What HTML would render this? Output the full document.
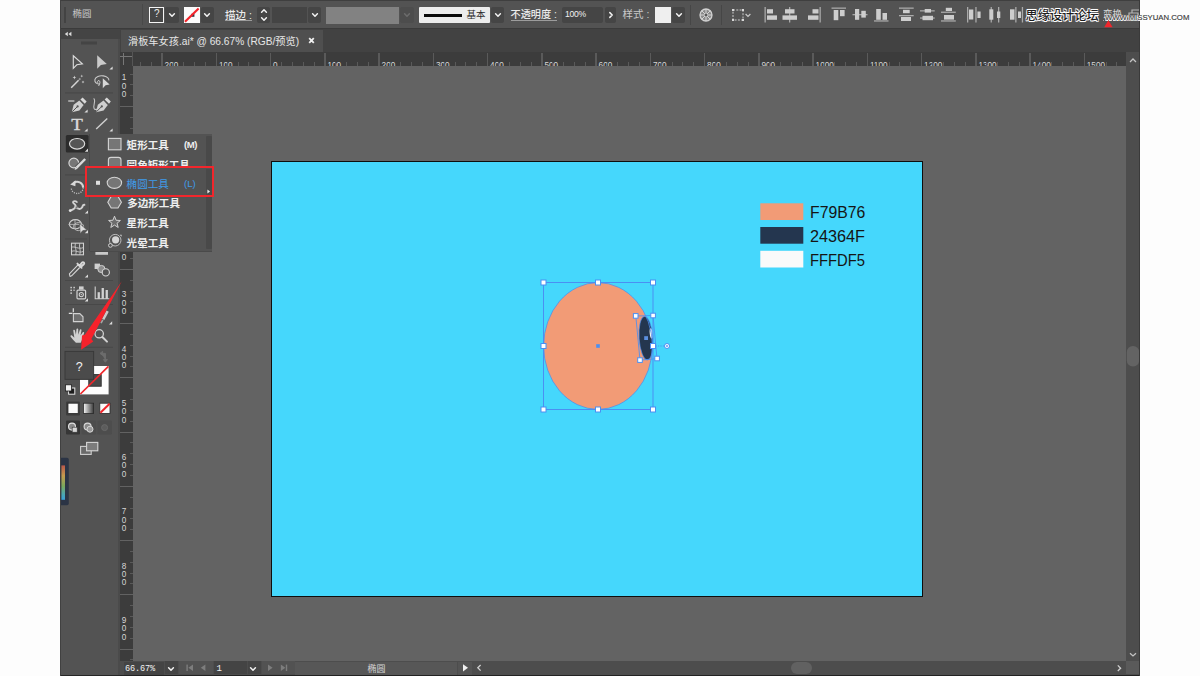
<!DOCTYPE html>
<html lang="zh-CN">
<head>
<meta charset="utf-8">
<title>滑板车女孩.ai</title>
<style>
html,body{margin:0;padding:0}
body{width:1200px;height:676px;position:relative;overflow:hidden;background:#fdfdfd;font-family:"Liberation Sans","Noto Sans CJK SC",sans-serif;font-size:10px;color:#d6d6d6}
.a{position:absolute;display:block}
svg{position:absolute;overflow:visible}
#app{left:60px;top:0;width:1080px;height:676px;background:#535353}
.dd{background:#454545;border-radius:2px}
.lbl{white-space:nowrap;line-height:12px;font-size:10.5px;color:#e4e4e4}
.mi{white-space:nowrap;line-height:12px;font-size:10.55px;color:#eeeeee;font-weight:700}
.rt{font-size:8.2px;line-height:9px;color:#d6d6d6;white-space:nowrap}
.rv{font-size:8.2px;line-height:8.4px;color:#d6d6d6;width:8px;text-align:center}
</style>
</head>
<body>
<div class="a" id="app"></div>
<!-- control bar -->
<div class="a" id="cbar" style="left:60px;top:0;width:1080px;height:29px;background:#535353;border-top:1.5px solid #3f3f3f;border-bottom:1px solid #3b3b3b;box-sizing:border-box"></div>
<!-- tab strip -->
<div class="a" id="tabstrip" style="left:120px;top:29px;width:1020px;height:23px;background:#424242"></div>
<!-- toolbar header -->
<div class="a" id="tbhead" style="left:60px;top:29px;width:60px;height:10px;background:#444444"></div>
<!-- canvas -->
<div class="a" id="canvas" style="left:133px;top:66px;width:993px;height:595px;background:#636363"></div>
<div class="a" id="artboard" style="left:271px;top:161px;width:652px;height:436px;background:#45d7fc;border:1px solid #0e0e0e;box-sizing:border-box"></div>
<!-- scrollbars / status -->
<div class="a" id="vscroll" style="left:1126px;top:52px;width:14px;height:609px;background:#4d4d4d"></div>
<div class="a" id="status" style="left:120px;top:661px;width:1020px;height:15px;background:#4d4d4d"></div>

<div class="a" id="rulerT" style="left:120px;top:52px;width:1006px;height:14px;background:#3c3c3c;overflow:hidden">
<i class="a" style="left:19.9px;top:10px;width:1px;height:4px;background:#5a5a5a"></i>
<i class="a" style="left:30.8px;top:10px;width:1px;height:4px;background:#5a5a5a"></i>
<i class="a" style="left:41.3px;top:1px;width:1.6px;height:13px;background:#5a5a5a"></i>
<span class="a rt" style="left:44.6px;top:9.3px">200</span>
<i class="a" style="left:52.5px;top:10px;width:1px;height:4px;background:#5a5a5a"></i>
<i class="a" style="left:63.3px;top:10px;width:1px;height:4px;background:#5a5a5a"></i>
<i class="a" style="left:74.2px;top:10px;width:1px;height:4px;background:#5a5a5a"></i>
<i class="a" style="left:85.0px;top:10px;width:1px;height:4px;background:#5a5a5a"></i>
<i class="a" style="left:95.6px;top:1px;width:1.6px;height:13px;background:#5a5a5a"></i>
<span class="a rt" style="left:98.9px;top:9.3px">100</span>
<i class="a" style="left:106.7px;top:10px;width:1px;height:4px;background:#5a5a5a"></i>
<i class="a" style="left:117.6px;top:10px;width:1px;height:4px;background:#5a5a5a"></i>
<i class="a" style="left:128.4px;top:10px;width:1px;height:4px;background:#5a5a5a"></i>
<i class="a" style="left:139.2px;top:10px;width:1px;height:4px;background:#5a5a5a"></i>
<i class="a" style="left:149.8px;top:1px;width:1.6px;height:13px;background:#5a5a5a"></i>
<span class="a rt" style="left:153.1px;top:9.3px">0</span>
<i class="a" style="left:161.0px;top:10px;width:1px;height:4px;background:#5a5a5a"></i>
<i class="a" style="left:171.8px;top:10px;width:1px;height:4px;background:#5a5a5a"></i>
<i class="a" style="left:182.7px;top:10px;width:1px;height:4px;background:#5a5a5a"></i>
<i class="a" style="left:193.5px;top:10px;width:1px;height:4px;background:#5a5a5a"></i>
<i class="a" style="left:204.1px;top:1px;width:1.6px;height:13px;background:#5a5a5a"></i>
<span class="a rt" style="left:207.4px;top:9.3px">100</span>
<i class="a" style="left:215.2px;top:10px;width:1px;height:4px;background:#5a5a5a"></i>
<i class="a" style="left:226.1px;top:10px;width:1px;height:4px;background:#5a5a5a"></i>
<i class="a" style="left:236.9px;top:10px;width:1px;height:4px;background:#5a5a5a"></i>
<i class="a" style="left:247.8px;top:10px;width:1px;height:4px;background:#5a5a5a"></i>
<i class="a" style="left:258.3px;top:1px;width:1.6px;height:13px;background:#5a5a5a"></i>
<span class="a rt" style="left:261.6px;top:9.3px">200</span>
<i class="a" style="left:269.5px;top:10px;width:1px;height:4px;background:#5a5a5a"></i>
<i class="a" style="left:280.3px;top:10px;width:1px;height:4px;background:#5a5a5a"></i>
<i class="a" style="left:291.2px;top:10px;width:1px;height:4px;background:#5a5a5a"></i>
<i class="a" style="left:302.0px;top:10px;width:1px;height:4px;background:#5a5a5a"></i>
<i class="a" style="left:312.6px;top:1px;width:1.6px;height:13px;background:#5a5a5a"></i>
<span class="a rt" style="left:315.9px;top:9.3px">300</span>
<i class="a" style="left:323.7px;top:10px;width:1px;height:4px;background:#5a5a5a"></i>
<i class="a" style="left:334.6px;top:10px;width:1px;height:4px;background:#5a5a5a"></i>
<i class="a" style="left:345.4px;top:10px;width:1px;height:4px;background:#5a5a5a"></i>
<i class="a" style="left:356.2px;top:10px;width:1px;height:4px;background:#5a5a5a"></i>
<i class="a" style="left:366.8px;top:1px;width:1.6px;height:13px;background:#5a5a5a"></i>
<span class="a rt" style="left:370.1px;top:9.3px">400</span>
<i class="a" style="left:378.0px;top:10px;width:1px;height:4px;background:#5a5a5a"></i>
<i class="a" style="left:388.8px;top:10px;width:1px;height:4px;background:#5a5a5a"></i>
<i class="a" style="left:399.6px;top:10px;width:1px;height:4px;background:#5a5a5a"></i>
<i class="a" style="left:410.5px;top:10px;width:1px;height:4px;background:#5a5a5a"></i>
<i class="a" style="left:421.1px;top:1px;width:1.6px;height:13px;background:#5a5a5a"></i>
<span class="a rt" style="left:424.4px;top:9.3px">500</span>
<i class="a" style="left:432.2px;top:10px;width:1px;height:4px;background:#5a5a5a"></i>
<i class="a" style="left:443.1px;top:10px;width:1px;height:4px;background:#5a5a5a"></i>
<i class="a" style="left:453.9px;top:10px;width:1px;height:4px;background:#5a5a5a"></i>
<i class="a" style="left:464.8px;top:10px;width:1px;height:4px;background:#5a5a5a"></i>
<i class="a" style="left:475.3px;top:1px;width:1.6px;height:13px;background:#5a5a5a"></i>
<span class="a rt" style="left:478.6px;top:9.3px">600</span>
<i class="a" style="left:486.5px;top:10px;width:1px;height:4px;background:#5a5a5a"></i>
<i class="a" style="left:497.3px;top:10px;width:1px;height:4px;background:#5a5a5a"></i>
<i class="a" style="left:508.1px;top:10px;width:1px;height:4px;background:#5a5a5a"></i>
<i class="a" style="left:519.0px;top:10px;width:1px;height:4px;background:#5a5a5a"></i>
<i class="a" style="left:529.6px;top:1px;width:1.6px;height:13px;background:#5a5a5a"></i>
<span class="a rt" style="left:532.9px;top:9.3px">700</span>
<i class="a" style="left:540.7px;top:10px;width:1px;height:4px;background:#5a5a5a"></i>
<i class="a" style="left:551.6px;top:10px;width:1px;height:4px;background:#5a5a5a"></i>
<i class="a" style="left:562.4px;top:10px;width:1px;height:4px;background:#5a5a5a"></i>
<i class="a" style="left:573.2px;top:10px;width:1px;height:4px;background:#5a5a5a"></i>
<i class="a" style="left:583.8px;top:1px;width:1.6px;height:13px;background:#5a5a5a"></i>
<span class="a rt" style="left:587.1px;top:9.3px">800</span>
<i class="a" style="left:595.0px;top:10px;width:1px;height:4px;background:#5a5a5a"></i>
<i class="a" style="left:605.8px;top:10px;width:1px;height:4px;background:#5a5a5a"></i>
<i class="a" style="left:616.6px;top:10px;width:1px;height:4px;background:#5a5a5a"></i>
<i class="a" style="left:627.5px;top:10px;width:1px;height:4px;background:#5a5a5a"></i>
<i class="a" style="left:638.1px;top:1px;width:1.6px;height:13px;background:#5a5a5a"></i>
<span class="a rt" style="left:641.4px;top:9.3px">900</span>
<i class="a" style="left:649.2px;top:10px;width:1px;height:4px;background:#5a5a5a"></i>
<i class="a" style="left:660.1px;top:10px;width:1px;height:4px;background:#5a5a5a"></i>
<i class="a" style="left:670.9px;top:10px;width:1px;height:4px;background:#5a5a5a"></i>
<i class="a" style="left:681.8px;top:10px;width:1px;height:4px;background:#5a5a5a"></i>
<i class="a" style="left:692.3px;top:1px;width:1.6px;height:13px;background:#5a5a5a"></i>
<span class="a rt" style="left:695.6px;top:9.3px">1000</span>
<i class="a" style="left:703.5px;top:10px;width:1px;height:4px;background:#5a5a5a"></i>
<i class="a" style="left:714.3px;top:10px;width:1px;height:4px;background:#5a5a5a"></i>
<i class="a" style="left:725.1px;top:10px;width:1px;height:4px;background:#5a5a5a"></i>
<i class="a" style="left:736.0px;top:10px;width:1px;height:4px;background:#5a5a5a"></i>
<i class="a" style="left:746.6px;top:1px;width:1.6px;height:13px;background:#5a5a5a"></i>
<span class="a rt" style="left:749.9px;top:9.3px">1100</span>
<i class="a" style="left:757.7px;top:10px;width:1px;height:4px;background:#5a5a5a"></i>
<i class="a" style="left:768.6px;top:10px;width:1px;height:4px;background:#5a5a5a"></i>
<i class="a" style="left:779.4px;top:10px;width:1px;height:4px;background:#5a5a5a"></i>
<i class="a" style="left:790.2px;top:10px;width:1px;height:4px;background:#5a5a5a"></i>
<i class="a" style="left:800.8px;top:1px;width:1.6px;height:13px;background:#5a5a5a"></i>
<span class="a rt" style="left:804.1px;top:9.3px">1200</span>
<i class="a" style="left:812.0px;top:10px;width:1px;height:4px;background:#5a5a5a"></i>
<i class="a" style="left:822.8px;top:10px;width:1px;height:4px;background:#5a5a5a"></i>
<i class="a" style="left:833.6px;top:10px;width:1px;height:4px;background:#5a5a5a"></i>
<i class="a" style="left:844.5px;top:10px;width:1px;height:4px;background:#5a5a5a"></i>
<i class="a" style="left:855.1px;top:1px;width:1.6px;height:13px;background:#5a5a5a"></i>
<span class="a rt" style="left:858.4px;top:9.3px">1300</span>
<i class="a" style="left:866.2px;top:10px;width:1px;height:4px;background:#5a5a5a"></i>
<i class="a" style="left:877.1px;top:10px;width:1px;height:4px;background:#5a5a5a"></i>
<i class="a" style="left:887.9px;top:10px;width:1px;height:4px;background:#5a5a5a"></i>
<i class="a" style="left:898.8px;top:10px;width:1px;height:4px;background:#5a5a5a"></i>
<i class="a" style="left:909.3px;top:1px;width:1.6px;height:13px;background:#5a5a5a"></i>
<span class="a rt" style="left:912.6px;top:9.3px">1400</span>
<i class="a" style="left:920.4px;top:10px;width:1px;height:4px;background:#5a5a5a"></i>
<i class="a" style="left:931.3px;top:10px;width:1px;height:4px;background:#5a5a5a"></i>
<i class="a" style="left:942.1px;top:10px;width:1px;height:4px;background:#5a5a5a"></i>
<i class="a" style="left:953.0px;top:10px;width:1px;height:4px;background:#5a5a5a"></i>
<i class="a" style="left:963.5px;top:1px;width:1.6px;height:13px;background:#5a5a5a"></i>
<span class="a rt" style="left:966.8px;top:9.3px">1500</span>
<i class="a" style="left:974.7px;top:10px;width:1px;height:4px;background:#5a5a5a"></i>
<i class="a" style="left:985.5px;top:10px;width:1px;height:4px;background:#5a5a5a"></i>
<i class="a" style="left:996.4px;top:10px;width:1px;height:4px;background:#5a5a5a"></i>
</div>
<div class="a" id="rulerL" style="left:120px;top:66px;width:13px;height:595px;background:#3c3c3c;overflow:hidden">
<i class="a" style="left:10px;top:7.5px;width:3px;height:1px;background:#5a5a5a"></i>
<i class="a" style="left:10px;top:18.4px;width:3px;height:1px;background:#5a5a5a"></i>
<i class="a" style="left:10px;top:29.2px;width:3px;height:1px;background:#5a5a5a"></i>
<i class="a" style="left:0;top:40.1px;width:13px;height:1px;background:#626262"></i>
<span class="a rv" style="left:0px;top:8.3px">1<br>0<br>0</span>
<i class="a" style="left:10px;top:50.9px;width:3px;height:1px;background:#5a5a5a"></i>
<i class="a" style="left:10px;top:61.8px;width:3px;height:1px;background:#5a5a5a"></i>
<i class="a" style="left:10px;top:72.6px;width:3px;height:1px;background:#5a5a5a"></i>
<i class="a" style="left:10px;top:83.5px;width:3px;height:1px;background:#5a5a5a"></i>
<i class="a" style="left:0;top:94.3px;width:13px;height:1px;background:#626262"></i>
<i class="a" style="left:10px;top:105.2px;width:3px;height:1px;background:#5a5a5a"></i>
<i class="a" style="left:10px;top:116.0px;width:3px;height:1px;background:#5a5a5a"></i>
<i class="a" style="left:10px;top:126.9px;width:3px;height:1px;background:#5a5a5a"></i>
<i class="a" style="left:10px;top:137.7px;width:3px;height:1px;background:#5a5a5a"></i>
<i class="a" style="left:0;top:148.6px;width:13px;height:1px;background:#626262"></i>
<span class="a rv" style="left:0px;top:116.8px">1<br>0<br>0</span>
<i class="a" style="left:10px;top:159.4px;width:3px;height:1px;background:#5a5a5a"></i>
<i class="a" style="left:10px;top:170.2px;width:3px;height:1px;background:#5a5a5a"></i>
<i class="a" style="left:10px;top:181.1px;width:3px;height:1px;background:#5a5a5a"></i>
<i class="a" style="left:10px;top:191.9px;width:3px;height:1px;background:#5a5a5a"></i>
<i class="a" style="left:0;top:202.8px;width:13px;height:1px;background:#626262"></i>
<span class="a rv" style="left:0px;top:171.0px">2<br>0<br>0</span>
<i class="a" style="left:10px;top:213.7px;width:3px;height:1px;background:#5a5a5a"></i>
<i class="a" style="left:10px;top:224.5px;width:3px;height:1px;background:#5a5a5a"></i>
<i class="a" style="left:10px;top:235.4px;width:3px;height:1px;background:#5a5a5a"></i>
<i class="a" style="left:10px;top:246.2px;width:3px;height:1px;background:#5a5a5a"></i>
<i class="a" style="left:0;top:257.1px;width:13px;height:1px;background:#626262"></i>
<span class="a rv" style="left:0px;top:225.2px">3<br>0<br>0</span>
<i class="a" style="left:10px;top:267.9px;width:3px;height:1px;background:#5a5a5a"></i>
<i class="a" style="left:10px;top:278.8px;width:3px;height:1px;background:#5a5a5a"></i>
<i class="a" style="left:10px;top:289.6px;width:3px;height:1px;background:#5a5a5a"></i>
<i class="a" style="left:10px;top:300.4px;width:3px;height:1px;background:#5a5a5a"></i>
<i class="a" style="left:0;top:311.3px;width:13px;height:1px;background:#626262"></i>
<span class="a rv" style="left:0px;top:279.5px">4<br>0<br>0</span>
<i class="a" style="left:10px;top:322.2px;width:3px;height:1px;background:#5a5a5a"></i>
<i class="a" style="left:10px;top:333.0px;width:3px;height:1px;background:#5a5a5a"></i>
<i class="a" style="left:10px;top:343.9px;width:3px;height:1px;background:#5a5a5a"></i>
<i class="a" style="left:10px;top:354.7px;width:3px;height:1px;background:#5a5a5a"></i>
<i class="a" style="left:0;top:365.6px;width:13px;height:1px;background:#626262"></i>
<span class="a rv" style="left:0px;top:333.8px">5<br>0<br>0</span>
<i class="a" style="left:10px;top:376.4px;width:3px;height:1px;background:#5a5a5a"></i>
<i class="a" style="left:10px;top:387.2px;width:3px;height:1px;background:#5a5a5a"></i>
<i class="a" style="left:10px;top:398.1px;width:3px;height:1px;background:#5a5a5a"></i>
<i class="a" style="left:10px;top:408.9px;width:3px;height:1px;background:#5a5a5a"></i>
<i class="a" style="left:0;top:419.8px;width:13px;height:1px;background:#626262"></i>
<span class="a rv" style="left:0px;top:388.0px">6<br>0<br>0</span>
<i class="a" style="left:10px;top:430.7px;width:3px;height:1px;background:#5a5a5a"></i>
<i class="a" style="left:10px;top:441.5px;width:3px;height:1px;background:#5a5a5a"></i>
<i class="a" style="left:10px;top:452.4px;width:3px;height:1px;background:#5a5a5a"></i>
<i class="a" style="left:10px;top:463.2px;width:3px;height:1px;background:#5a5a5a"></i>
<i class="a" style="left:0;top:474.0px;width:13px;height:1px;background:#626262"></i>
<span class="a rv" style="left:0px;top:442.2px">7<br>0<br>0</span>
<i class="a" style="left:10px;top:484.9px;width:3px;height:1px;background:#5a5a5a"></i>
<i class="a" style="left:10px;top:495.8px;width:3px;height:1px;background:#5a5a5a"></i>
<i class="a" style="left:10px;top:506.6px;width:3px;height:1px;background:#5a5a5a"></i>
<i class="a" style="left:10px;top:517.4px;width:3px;height:1px;background:#5a5a5a"></i>
<i class="a" style="left:0;top:528.3px;width:13px;height:1px;background:#626262"></i>
<span class="a rv" style="left:0px;top:496.5px">8<br>0<br>0</span>
<i class="a" style="left:10px;top:539.1px;width:3px;height:1px;background:#5a5a5a"></i>
<i class="a" style="left:10px;top:550.0px;width:3px;height:1px;background:#5a5a5a"></i>
<i class="a" style="left:10px;top:560.8px;width:3px;height:1px;background:#5a5a5a"></i>
<i class="a" style="left:10px;top:571.7px;width:3px;height:1px;background:#5a5a5a"></i>
<i class="a" style="left:0;top:582.5px;width:13px;height:1px;background:#626262"></i>
<span class="a rv" style="left:0px;top:550.8px">9<br>0<br>0</span>
<i class="a" style="left:10px;top:593.4px;width:3px;height:1px;background:#5a5a5a"></i>
</div>
<div class="a" id="rcorner" style="left:120px;top:52px;width:13px;height:14px;background:#3c3c3c;border-right:1px solid #555;box-sizing:border-box"><i class="a" style="left:3px;top:1px;width:1px;height:12px;background:#777"></i><i class="a" style="left:0;top:3.6px;width:12px;height:1px;background:#777"></i></div>
<!-- ===== control bar contents ===== -->
<svg width="0" height="0" style="left:0;top:0"><defs>
<path id="chev" d="M-2.4,-1.2 L0,1.2 L2.4,-1.2" fill="none" stroke-width="1.5" stroke-linecap="round" stroke-linejoin="round"/>
</defs></svg>
<i class="a" style="left:64px;top:7px;width:2px;height:16px;background:#434343"></i>
<span class="a lbl" style="left:72.6px;top:8.1px;font-size:9.5px;color:#c8c8c8">椭圆</span>

<!-- fill box -->
<i class="a" style="left:142px;top:4px;width:1px;height:21px;background:#494949"></i>
<div class="a" style="left:149px;top:7px;width:15.4px;height:16px;box-sizing:border-box;border:1.8px solid #f4f4f4;background:#464646;color:#e8e8e8;font-size:10px;line-height:12px;text-align:center">?</div>
<div class="a dd" style="left:165px;top:7px;width:13.5px;height:16px"></div>
<svg style="left:171.8px;top:15.2px" width="1" height="1"><use href="#chev" stroke="#f2f2f2"/></svg>
<!-- stroke box -->
<div class="a" style="left:184px;top:7px;width:16px;height:16px;background:#fbfbfb"></div>
<svg style="left:184px;top:7px" width="16" height="16" viewBox="0 0 16 16"><rect x="7.2" y="6.8" width="3.2" height="3" fill="#2e3444"/><path d="M1,14.8 L14.6,1.4" stroke="#f4232a" stroke-width="2.1" fill="none"/></svg>
<div class="a dd" style="left:200.5px;top:7px;width:13.5px;height:16px"></div>
<svg style="left:207.4px;top:15.2px" width="1" height="1"><use href="#chev" stroke="#f2f2f2"/></svg>

<span class="a lbl" style="left:225px;top:8.6px;font-size:10.5px;font-weight:500;color:#ececec;border-bottom:1px solid #9c9c9c;line-height:12px;height:11.6px">描边 :</span>
<div class="a dd" style="left:257px;top:7px;width:13px;height:16px"></div>
<svg style="left:263.5px;top:11.2px" width="1" height="1"><use href="#chev" stroke="#f2f2f2" transform="scale(1,-1)"/></svg>
<svg style="left:263.5px;top:18.8px" width="1" height="1"><use href="#chev" stroke="#f2f2f2"/></svg>
<div class="a" style="left:272px;top:7px;width:35px;height:16px;background:#444444"></div>
<div class="a dd" style="left:308px;top:7px;width:13px;height:16px"></div>
<svg style="left:314.5px;top:15px" width="1" height="1"><use href="#chev" stroke="#f2f2f2"/></svg>

<div class="a" style="left:326px;top:6.5px;width:73px;height:17px;background:#828282"></div>
<div class="a" style="left:400px;top:7px;width:14px;height:16px;background:#4d4d4d;border-radius:2px"></div>
<svg style="left:407px;top:15px" width="1" height="1"><use href="#chev" stroke="#6c6c6c"/></svg>

<!-- stroke profile -->
<div class="a" style="left:419px;top:7px;width:71px;height:16px;background:#ececec;border-radius:1px"></div>
<i class="a" style="left:424px;top:13.5px;width:38px;height:3px;background:#0a0a0a"></i>
<span class="a lbl" style="left:466.5px;top:8.5px;font-size:9.5px;color:#2a2a2a">基本</span>
<div class="a dd" style="left:491px;top:7px;width:13px;height:16px"></div>
<svg style="left:497.5px;top:15px" width="1" height="1"><use href="#chev" stroke="#f2f2f2"/></svg>

<span class="a lbl" style="left:510.5px;top:8.6px;font-size:10.2px;font-weight:500;color:#ececec;border-bottom:1px solid #9c9c9c;line-height:12px;height:11.6px">不透明度 :</span>
<div class="a" style="left:562px;top:7px;width:41px;height:16px;background:#454545;border-radius:2px"></div>
<span class="a lbl" style="left:565px;top:8px;font-size:8.6px;color:#f0f0f0;letter-spacing:-0.25px">100%</span>
<div class="a dd" style="left:605px;top:7px;width:11px;height:16px"></div>
<svg style="left:610.5px;top:15px" width="1" height="1"><use href="#chev" stroke="#f2f2f2" transform="rotate(-90)"/></svg>

<span class="a lbl" style="left:622.5px;top:8px;font-size:10.5px;color:#c9c9c9">样式 :</span>
<div class="a" style="left:655px;top:7px;width:16px;height:16px;background:#efefef"></div>
<div class="a dd" style="left:672px;top:7px;width:13px;height:16px"></div>
<svg style="left:678.5px;top:15px" width="1" height="1"><use href="#chev" stroke="#f2f2f2"/></svg>
<i class="a" style="left:690px;top:5px;width:1px;height:20px;background:#464646"></i>
<!-- recolor wheel -->
<svg style="left:699px;top:8px" width="14" height="14" viewBox="-7 -7 14 14"><circle r="6" fill="#8a8a8a" stroke="#d2d2d2" stroke-width="1.3"/><g stroke="#d6d6d6" stroke-width="1"><path d="M0,-6V6M-6,0H6M-4.2,-4.2L4.2,4.2M-4.2,4.2L4.2,-4.2"/></g><circle r="1.2" fill="#555"/></svg>
<i class="a" style="left:721px;top:5px;width:1px;height:20px;background:#464646"></i>
<!-- select similar -->
<svg style="left:732px;top:9px" width="20" height="12" viewBox="0 0 20 12"><rect x="1" y="1" width="10" height="10" fill="none" stroke="#c9c9c9" stroke-width="1" stroke-dasharray="2 1.3"/><g fill="#d8d8d8"><rect x="0" y="0" width="2" height="2"/><rect x="10" y="0" width="2" height="2"/><rect x="0" y="10" width="2" height="2"/><rect x="10" y="10" width="2" height="2"/></g><path d="M13.6,5 L16,7.4 L18.4,5" fill="none" stroke="#c9c9c9" stroke-width="1.2"/></svg>

<!-- align / distribute icons -->
<svg style="left:760px;top:0" width="270" height="29" viewBox="760 0 270 29">
<g fill="#cdcdcd">
<!-- align left -->
<rect x="764.5" y="7" width="1.3" height="15.5" fill="#a9a9a9"/><rect x="767" y="9.2" width="6" height="4.3"/><rect x="767" y="15.4" width="10" height="4.4"/>
<!-- align h-center -->
<rect x="789" y="7" width="1.3" height="15.5" fill="#a9a9a9"/><rect x="785" y="9.2" width="9.5" height="4.3"/><rect x="782.5" y="15.4" width="14.5" height="4.4"/>
<!-- align right -->
<rect x="819.5" y="7" width="1.3" height="15.5" fill="#a9a9a9"/><rect x="812.5" y="9.2" width="6" height="4.3"/><rect x="808" y="15.4" width="10.5" height="4.4"/>
<!-- align top -->
<rect x="831.5" y="7.5" width="14.5" height="1.3" fill="#a9a9a9"/><rect x="833.7" y="10" width="4.6" height="10.2"/><rect x="840" y="10" width="4.6" height="6.2"/>
<!-- align v-center -->
<rect x="852.5" y="14" width="15" height="1.3" fill="#a9a9a9"/><rect x="855" y="9" width="4.2" height="10.8"/><rect x="861.3" y="10.8" width="4.5" height="6.8"/>
<!-- align bottom -->
<rect x="874" y="20.3" width="14.5" height="1.3" fill="#a9a9a9"/><rect x="876.2" y="9" width="4.6" height="10.8"/><rect x="882.5" y="13" width="4.5" height="6.8"/>
<!-- distribute top -->
<rect x="899" y="7.5" width="14.7" height="1.3" fill="#a9a9a9"/><rect x="903" y="9.8" width="6.7" height="3.4"/><rect x="899" y="15" width="14.7" height="1.3" fill="#a9a9a9"/><rect x="901" y="17" width="10" height="4"/>
<!-- distribute v-center -->
<rect x="920" y="10.2" width="14.7" height="1.3" fill="#a9a9a9"/><rect x="924.7" y="9" width="6.3" height="3.6"/><rect x="920" y="17.4" width="14.7" height="1.3" fill="#a9a9a9"/><rect x="922.5" y="15.8" width="10.5" height="4.4"/>
<!-- distribute bottom -->
<rect x="945.8" y="7.8" width="6.2" height="3.2"/><rect x="941" y="11.6" width="14.8" height="1.3" fill="#a9a9a9"/><rect x="944" y="15" width="10" height="4.6"/><rect x="941" y="20.3" width="14.8" height="1.3" fill="#a9a9a9"/>
<!-- distribute left -->
<rect x="967" y="7" width="1.3" height="15.5" fill="#a9a9a9"/><rect x="969" y="9.5" width="4.3" height="10"/><rect x="975.3" y="7" width="1.3" height="15.5" fill="#a9a9a9"/><rect x="977.4" y="11.5" width="3.2" height="6.5"/>
<!-- distribute h-center -->
<rect x="990.6" y="7" width="1.3" height="15.5" fill="#a9a9a9"/><rect x="989.3" y="9.3" width="4" height="10.4"/><rect x="998" y="7" width="1.3" height="15.5" fill="#a9a9a9"/><rect x="997" y="11.5" width="3.3" height="6.5"/>
<!-- distribute right -->
<rect x="1010" y="9.3" width="4.5" height="10.4"/><rect x="1015.2" y="7" width="1.3" height="15.5" fill="#a9a9a9"/><rect x="1018" y="11.5" width="3" height="6.5"/><rect x="1021.8" y="7" width="1.3" height="15.5" fill="#a9a9a9"/>
</g></svg>

<!-- transform label (partly hidden by watermark) -->
<span class="a lbl" style="left:1103px;top:7.5px;font-size:9.5px;color:#d8d8d8;border-bottom:1px dotted #aaa">变换</span>
<svg style="left:1127px;top:7px" width="13" height="12" viewBox="0 0 13 12"><path d="M2,6H11V11H2Z M5,6V3H13" fill="none" stroke="#b5b5b5" stroke-width="1.2"/></svg>

<!-- ===== document tab ===== -->
<div class="a" id="tab" style="left:121px;top:30px;width:202px;height:22px;background:#4f4f4f"></div>
<span class="a lbl" style="left:128px;top:35.5px;font-size:10.2px;color:#e6e6e6;letter-spacing:0">滑板车女孩.ai* @ 66.67% (RGB/预览)</span>
<svg style="left:308px;top:37px" width="7" height="7" viewBox="0 0 7 7"><path d="M1.2,1.2L5.8,5.8M5.8,1.2L1.2,5.8" stroke="#f0f0f0" stroke-width="1.8" fill="none"/></svg>

<!-- ===== toolbar ===== -->
<i class="a" style="left:118px;top:39px;width:2px;height:637px;background:#4b4b4b"></i>
<svg style="left:60px;top:29px" width="60" height="450" viewBox="60 29 60 450">
<defs><path id="cnr" d="M0,0 V-3.2 L-3.2,0 Z" fill="#dcdcdc"/></defs>
<!-- collapse arrows + grip -->
<path d="M67.8,31.7 L64.8,34 L67.8,36.3 Z M71.4,31.7 L68.4,34 L71.4,36.3 Z" fill="#dcdcdc"/>
<rect x="81" y="41.5" width="16" height="3" fill="#444"/>
<!-- row1 selection tools -->
<path d="M73.3,55.8 L82.4,63.8 L76.8,64.8 L73.3,68.4 Z" fill="none" stroke="#dadada" stroke-width="1.15" stroke-linejoin="miter"/>
<path d="M97.2,55.2 L106.8,63.9 L100.9,64.9 L97.2,68.8 Z" fill="#cacaca"/>
<use href="#cnr" x="112.6" y="69.6"/>
<!-- row2 wand + lasso -->
<path d="M71.2,87.8 L78.6,80.2" stroke="#d4d4d4" stroke-width="1.5" fill="none"/>
<path d="M79,79.8 L80.4,78.4" stroke="#9a9a9a" stroke-width="1.8"/>
<g fill="#d0d0d0"><path d="M74.4,75.6l.5,1.4 1.4,.5-1.4,.5-.5,1.4-.5-1.4-1.4-.5 1.4-.5z"/><path d="M81.8,74.6l.4,1.1 1.1,.4-1.1,.4-.4,1.1-.4-1.1-1.1-.4 1.1-.4z"/><path d="M83,80.6l.4,1 1,.4-1,.4-.4,1-.4-1-1-.4 1-.4z"/></g>
<path d="M99.4,84.2 C96.2,83.6 94.6,81.6 94.9,79.6 C95.4,76.6 99.5,75.3 103.4,75.9 C107,76.5 109.2,78.4 108.8,80.4" fill="none" stroke="#c8c8c8" stroke-width="1.1"/>
<path d="M98.3,83.2 C96.8,82.2 97.4,80.2 99,80.6 C100.4,81 100.2,83.4 98.6,86 " fill="none" stroke="#c8c8c8" stroke-width="1"/>
<path d="M102.8,78.2 L109.6,84.6 L105.6,85.2 L102.8,88.2 Z" fill="#d6d6d6"/>
<rect x="65" y="92.4" width="48" height="1" fill="#464646"/>
<!-- row3 pen tools -->
<rect x="68.2" y="100.4" width="6.2" height="1.2" fill="#d2d2d2"/>
<g id="pen"><path d="M79.3,100.6 L83.6,105 L79.4,110.6 L71.8,112.2 L73.6,104.8 Z" fill="#cfcfcf"/><path d="M72.2,111.8 L77.2,106.8" stroke="#535353" stroke-width="1"/><circle cx="77.6" cy="106.4" r="1.1" fill="#535353"/><path d="M80.4,99.4 L82.6,97.6 L86.6,101.6 L84.8,103.8 Z" fill="#d8d8d8"/></g>
<use href="#cnr" x="87.6" y="112.6"/>
<use href="#pen" x="24.2" y="0"/>
<path d="M93.6,98.6 C96.6,100.2 92.4,105.6 94.2,108.6 C95.2,110 96.6,109.6 97.4,109" fill="none" stroke="#c4c4c4" stroke-width="1.1"/>
<!-- row4 type + line -->
<text x="71.2" y="129.8" font-family="Liberation Serif,serif" font-size="16.6" fill="#dadada" stroke="#dadada" stroke-width=".35" textLength="11.6" lengthAdjust="spacingAndGlyphs">T</text>
<use href="#cnr" x="87.6" y="131.6"/>
<path d="M96.2,128.9 L107.3,118.4" stroke="#cfcfcf" stroke-width="1.4" fill="none"/>
<use href="#cnr" x="112.6" y="131.6"/>
<!-- row5 ellipse (selected) -->
<rect x="65.8" y="135" width="22.8" height="17.4" rx="1.5" fill="#2c2c2c"/>
<ellipse cx="77.1" cy="143.8" rx="7.6" ry="5.3" fill="#555" stroke="#dcdcdc" stroke-width="1.15"/>
<use href="#cnr" x="88" y="151.8"/>
<!-- row6 shaper -->
<circle cx="73.8" cy="163" r="4.9" fill="#777" stroke="#d6d6d6" stroke-width="1.15"/>
<path d="M85.2,159 L76.4,167.8" stroke="#535353" stroke-width="4.4"/>
<path d="M85.2,159 L76.6,167.6" stroke="#dadada" stroke-width="2.4"/>
<path d="M77.6,168.8 L74.6,169.9 L75.6,166.8 Z" fill="#dadada"/>
<rect x="65" y="174.4" width="22" height="1" fill="#464646"/>
<!-- row7 rotate -->
<path d="M73.6,183 A6,6 0 0 1 83.2,187.6" fill="none" stroke="#d4d4d4" stroke-width="2"/>
<path d="M83.2,187.6 A6,6 0 0 1 71.3,188.6" fill="none" stroke="#bdbdbd" stroke-width="1.3" stroke-dasharray="1.1 1.2"/>
<path d="M70.2,184.6 L75.6,180.2 L75.4,186.2 Z" fill="#d8d8d8"/>
<!-- row8 warp -->
<path d="M70.4,210.6 C73,209.8 75.4,208.2 75.6,206.2 C75.8,204 72.8,203.8 73,202.2 C73.2,200.8 75.8,200.8 76.8,202" fill="none" stroke="#d2d2d2" stroke-width="1.9" stroke-linecap="round"/>
<path d="M75.6,206.2 C77.4,209.6 80.8,209.6 82,207.6 C83,206 82.4,204.6 84.4,204.8" fill="none" stroke="#d2d2d2" stroke-width="1.9" stroke-linecap="round"/>
<circle cx="70.2" cy="210.6" r="1.4" fill="#e0e0e0"/><circle cx="76.6" cy="207.4" r="1.1" fill="#7a7a7a"/>
<use href="#cnr" x="88" y="213.6"/>
<!-- row9 shape builder -->
<ellipse cx="75.4" cy="224.2" rx="6" ry="4.6" fill="none" stroke="#d0d0d0" stroke-width="1.15"/>
<ellipse cx="78.6" cy="226.6" rx="5" ry="4" fill="none" stroke="#bdbdbd" stroke-width="1"/>
<path d="M75,219.6 V229 M68.4,224.4 H79" stroke="#b8b8b8" stroke-width=".9"/>
<path d="M79.6,223.4 L86.8,230 L82.8,230.6 L80.2,233.6 Z" fill="#dcdcdc" stroke="#535353" stroke-width=".6"/>
<use href="#cnr" x="88" y="233.2"/>
<!-- row10 mesh + gradient -->
<g transform="translate(2.1,0.8) translate(75.4,248.2) scale(.88) translate(-75.4,-248.2)"><rect x="68.6" y="241.6" width="13.6" height="13.2" fill="none" stroke="#d2d2d2" stroke-width="1.2"/>
<path d="M68.6,246.4 C72,244.4 76,249 82.2,246.6 M68.6,251 C73,248.6 77,253.6 82.2,250.8 M73,241.6 C71.4,246 75.4,249.6 73.4,254.8 M78,241.6 C76.4,246 80,250 78,254.8" fill="none" stroke="#cdcdcd" stroke-width="1"/></g>
<rect x="65" y="238.4" width="22" height="1" fill="#494949"/>
<rect x="65" y="280" width="48" height="1" fill="#484848"/>
<rect x="95.4" y="250.6" width="12.6" height="4.2" fill="#c9c9c9"/>
<!-- row11 eyedropper + blend -->
<path d="M70,276.4 L69.4,273.8 L78,264.8 L80.2,267 L71.6,275.8 Z" fill="#535353" stroke="#d4d4d4" stroke-width="1.1" stroke-linejoin="round"/>
<path d="M77.4,263.6 L81.6,267.8 M79.6,265.6 L82,262.6 C83.2,261.2 85,263 83.8,264.2 L81,266.8" stroke="#d8d8d8" stroke-width="1.9" fill="none" stroke-linecap="round"/>
<use href="#cnr" x="88" y="277.6"/>
<rect x="94.6" y="263.6" width="5.4" height="5.4" fill="#d0d0d0"/>
<circle cx="101.4" cy="269" r="3.6" fill="#8e8e8e" stroke="#d0d0d0" stroke-width="1"/>
<circle cx="105.8" cy="272.4" r="3.6" fill="#535353" stroke="#d6d6d6" stroke-width="1.1"/>
<!-- row12 symbol sprayer + graph -->
<g fill="#cfcfcf"><rect x="70.4" y="286.8" width="1.5" height="1.5"/><rect x="73.4" y="286.8" width="1.5" height="1.5"/><rect x="70.4" y="289.6" width="1.5" height="1.5"/><rect x="70.4" y="292.4" width="1.5" height="1.5"/><rect x="73.4" y="289.6" width="1.3" height="1.3"/></g>
<rect x="77" y="290.2" width="8.6" height="8.6" rx="1.1" fill="#535353" stroke="#d2d2d2" stroke-width="1.2"/>
<rect x="79" y="286.4" width="4.6" height="3.2" fill="#d0d0d0"/>
<circle cx="81.3" cy="294.6" r="2.1" fill="none" stroke="#d2d2d2" stroke-width="1.05"/><circle cx="81.3" cy="294.6" r=".7" fill="#d2d2d2"/>
<use href="#cnr" x="88" y="301.4"/>
<path d="M95.2,286.4 V298.8 H109.4" fill="none" stroke="#d0d0d0" stroke-width="1.1"/>
<rect x="97.6" y="292.2" width="2.3" height="6.6" fill="#d2d2d2"/><rect x="101.6" y="288" width="2.3" height="10.8" fill="#d2d2d2"/><rect x="105.6" y="290" width="2.3" height="8.8" fill="#d2d2d2"/>
<rect x="65" y="304" width="48" height="1" fill="#484848"/>
<!-- row13 artboard + slice -->
<path d="M73.3,308.2 V312.2 M68.8,313.4 H72.4" stroke="#dedede" stroke-width="1.2" fill="none"/>
<path d="M73.4,313.6 H79.8 L83,316.8 V321.6 H73.4 Z" fill="#6e6e6e" stroke="#d2d2d2" stroke-width="1.1"/>
<path d="M107.6,311.2 L103.2,319.4" stroke="#c9c9c9" stroke-width="2.6" stroke-linecap="butt"/>
<path d="M102.8,319.8 L101,323.2" stroke="#a5a5a5" stroke-width="1.6"/>
<use href="#cnr" x="112.2" y="324.4"/>
<!-- row14 hand + zoom -->
<path transform="translate(0.8,-2.4) translate(76,338) scale(.88) translate(-76,-338)" d="M75,346.2 C72.6,343.8 70.6,341.6 69,339.4 C68.2,338.2 69.6,337.2 70.6,338 L73.2,340.4 L72,332.6 C71.8,331.2 73.6,331 73.9,332.2 L75,337 L75.6,330.8 C75.7,329.4 77.6,329.5 77.6,330.9 L77.6,337 L79.4,331.6 C79.8,330.4 81.6,330.9 81.3,332.2 L80.2,337.8 L82.6,334.4 C83.4,333.4 84.8,334.3 84.2,335.4 C82.8,338.4 82.6,343.4 80.4,346.2 Z" fill="#d0d0d0"/>
<circle cx="99.2" cy="333.8" r="4.2" fill="none" stroke="#d2d2d2" stroke-width="1.25"/>
<path d="M102.4,337 L107,341.6" stroke="#d2d2d2" stroke-width="2" stroke-linecap="round"/>
<rect x="65" y="346.8" width="48" height="1" fill="#494949"/>
<!-- fill / stroke -->
<path d="M101.6,353.4 H105.4 V360.6 M100,353.4 l2.6,-2 v4 z M105.4,362.2 l-2,-2.6 h4 z" fill="#6d6d6d" stroke="#6d6d6d" stroke-width="1"/>
<rect x="80" y="366" width="28.6" height="28.4" fill="#fdfdfd"/>
<rect x="88.8" y="374.6" width="12.4" height="11.6" fill="#4a4a4a" stroke="#333" stroke-width="1"/>
<path d="M80.4,394 L108.4,366.4" stroke="#f0262b" stroke-width="1.7"/>
<rect x="65" y="351.4" width="28.6" height="28" fill="#4b4b4b" stroke="#3a3a3a" stroke-width="1"/>
<text x="79.3" y="370.6" text-anchor="middle" font-family="Liberation Sans,sans-serif" font-size="12.5" fill="#f2f2f2">?</text>
<rect x="68.6" y="388" width="6.2" height="6.2" fill="#1d1d1d" stroke="#e6e6e6" stroke-width="1"/>
<rect x="65.4" y="384.8" width="6.2" height="6.2" fill="#f4f4f4" stroke="#1d1d1d" stroke-width=".8"/>
<!-- colour / gradient / none -->
<rect x="66" y="401.4" width="14" height="14" rx="1" fill="#3d3d3d"/>
<rect x="68" y="403.2" width="10.2" height="10.2" fill="#fbfbfb" stroke="#2a2a2a" stroke-width=".8"/>
<linearGradient id="gr" x1="0" x2="1"><stop offset="0" stop-color="#fafafa"/><stop offset="1" stop-color="#3a3a3a"/></linearGradient>
<rect x="83.4" y="403.2" width="10.2" height="10.2" fill="url(#gr)" stroke="#2a2a2a" stroke-width=".8"/>
<rect x="99.8" y="403.2" width="10.2" height="10.2" fill="#fbfbfb" stroke="#2a2a2a" stroke-width=".8"/>
<path d="M100.4,412.8 L109.6,403.8" stroke="#f0262b" stroke-width="2"/>
<!-- draw modes -->
<rect x="66" y="420.6" width="14" height="14" rx="1" fill="#363636"/>
<rect x="81.6" y="420.6" width="14.6" height="14" rx="1" fill="#4d4d4d"/><rect x="97.4" y="420.6" width="14.6" height="14" rx="1" fill="#4d4d4d"/>
<circle cx="72" cy="426.6" r="3.5" fill="#8a8a8a" stroke="#e0e0e0" stroke-width="1.1"/><rect x="72.2" y="427.2" width="5" height="5" fill="#d8d8d8" stroke="#363636" stroke-width=".6"/>
<circle cx="87.6" cy="426.6" r="3.5" fill="#8a8a8a" stroke="#d8d8d8" stroke-width="1.1"/><circle cx="90" cy="429.2" r="3" fill="#9a9a9a" stroke="#d8d8d8" stroke-width="1"/>
<circle cx="104.6" cy="427.6" r="3" fill="#5c5c5c" stroke="#686868" stroke-width="1"/>
<!-- screen mode -->
<rect x="80.6" y="446.4" width="10.6" height="8" fill="#6a6a6a" stroke="#d0d0d0" stroke-width="1.1"/>
<rect x="86.6" y="442.4" width="11.2" height="8.4" fill="#7c7c7c" stroke="#d6d6d6" stroke-width="1.1"/>
</svg>
<!-- colour strip peeking at far left -->
<svg style="left:60px;top:457px" width="10" height="49" viewBox="0 0 10 49"><defs><linearGradient id="rb" x1="0" y1="0" x2="0" y2="1"><stop offset="0" stop-color="#b9584a"/><stop offset=".3" stop-color="#c49a4e"/><stop offset=".6" stop-color="#7aa85c"/><stop offset=".85" stop-color="#4aa6b4"/><stop offset="1" stop-color="#3a9fd8"/></linearGradient></defs><path d="M0,0.8 H7 Q8.8,0.8 8.8,2.6 V46.4 Q8.8,48.2 7,48.2 H0 Z" fill="#2b3445"/><rect x="1.4" y="8.4" width="3.6" height="34.4" fill="url(#rb)"/></svg>

<!-- ===== shape tool flyout ===== -->
<div class="a" id="flyout" style="left:90px;top:134px;width:122px;height:117px;background:#535353;box-shadow:-1px 0 0 #484848,0 1px 0 #4a4a4a"></div>
<i class="a" style="left:206px;top:136px;width:5.5px;height:113px;background:#494949;border-radius:1px"></i>
<svg style="left:90px;top:134px" width="122" height="117" viewBox="90 134 122 117">
<rect x="108.4" y="138.4" width="12.6" height="11.4" fill="#767676" stroke="#d4d4d4" stroke-width="1.1"/>
<rect x="108.4" y="157.4" width="12.6" height="11.4" rx="2.6" fill="#767676" stroke="#d4d4d4" stroke-width="1.1"/>
<path d="M107.8,202.2 L111.2,196.4 H118 L121.4,202.2 L118,208 H111.2 Z" fill="#767676" stroke="#d4d4d4" stroke-width="1.1"/>
<path transform="translate(114.5,222) scale(.88) translate(-114.5,-222)" d="M114.5,215.4 L116.3,220 L121.2,220.3 L117.4,223.4 L118.7,228.2 L114.5,225.5 L110.3,228.2 L111.6,223.4 L107.8,220.3 L112.7,220 Z" fill="#6c6c6c" stroke="#d4d4d4" stroke-width="1.1" stroke-linejoin="miter"/>
<circle cx="115.2" cy="240.2" r="5.8" fill="none" stroke="#bdbdbd" stroke-width="1"/>
<circle cx="115.6" cy="239.8" r="3.6" fill="#d6d6d6"/>
<circle cx="110.4" cy="245.4" r="1.9" fill="#535353" stroke="#d0d0d0" stroke-width="1"/>
<path d="M119.6,234.8 h2 v2 z" fill="#d8d8d8"/>
</svg>
<span class="a mi" style="left:126.6px;top:139px">矩形工具</span>
<span class="a mi" style="left:184px;top:139px;font-size:9.6px;letter-spacing:-0.5px">(M)</span>
<span class="a mi" style="left:126.6px;top:158.6px">圆角矩形工具</span>
<span class="a mi" style="left:127.2px;top:197.4px">多边形工具</span>
<span class="a mi" style="left:126.6px;top:216.9px">星形工具</span>
<span class="a mi" style="left:126.6px;top:236.6px">光晕工具</span>

<!-- ===== artwork ===== -->
<svg style="left:271px;top:161px" width="652" height="436" viewBox="271 161 652 436">
<ellipse cx="598" cy="346" rx="54.4" ry="63.4" fill="#f29b76"/>
<g transform="rotate(-4 646 338.2)">
<ellipse cx="646" cy="338.2" rx="6.9" ry="21.8" fill="#24364f"/>
</g>
<ellipse cx="651.2" cy="333.4" rx="1.5" ry="5.2" fill="#f4f4f0" transform="rotate(-6 651.2 333.4)"/>
<!-- selection: big ellipse -->
<g fill="none" stroke="#4a8ff2" stroke-width="1">
<ellipse cx="598" cy="346" rx="54.4" ry="63.4" stroke-opacity=".75"/>
<rect x="543.5" y="282.5" width="109.5" height="127"/>
<g transform="rotate(-4 646 338.2)"><ellipse cx="646" cy="338.2" rx="6.9" ry="21.8" stroke-opacity=".7"/></g>
<path d="M635.8,316 L653,315.5 L657,358.6 L640,360.2 Z" stroke-opacity=".85"/>
<path d="M655.6,346 H664.5" stroke-dasharray="1.2 1.2" stroke-opacity=".8"/>
</g>
<g fill="#ffffff" stroke="#4a8ff2" stroke-width="1">
<rect x="541" y="280" width="5" height="5"/><rect x="595.5" y="280" width="5" height="5"/><rect x="650.5" y="280" width="5" height="5"/>
<rect x="541" y="343.5" width="5" height="5"/><rect x="650.5" y="343.5" width="5" height="5"/>
<rect x="541" y="407" width="5" height="5"/><rect x="595.5" y="407" width="5" height="5"/><rect x="650.5" y="407" width="5" height="5"/>
<rect x="633.4" y="313.6" width="4.6" height="4.6"/><rect x="650.8" y="313.2" width="4.6" height="4.6"/>
<rect x="637.7" y="357.8" width="4.6" height="4.6"/><rect x="654.8" y="356.2" width="4.6" height="4.6"/>
<circle cx="667" cy="346" r="2.5"/>
</g>
<rect x="596.2" y="344.2" width="3.6" height="3.6" fill="#4a8ff2"/>
<rect x="644.2" y="336.2" width="3.8" height="3.8" fill="#5b8fe0"/>
<circle cx="667" cy="346" r=".9" fill="#4a8ff2"/>
<!-- swatches -->
<rect x="760.3" y="203.3" width="43" height="16.7" fill="#f29b76"/>
<rect x="760.3" y="227" width="43" height="16.7" fill="#24364f"/>
<rect x="760.3" y="250.8" width="43" height="16.7" fill="#fafafa"/>
<g font-family="Liberation Sans,sans-serif" font-size="16" fill="#151515">
<text x="810" y="217.8" textLength="55.2" lengthAdjust="spacingAndGlyphs">F79B76</text>
<text x="810" y="241.6" textLength="55" lengthAdjust="spacingAndGlyphs">24364F</text>
<text x="810" y="265.6" textLength="55" lengthAdjust="spacingAndGlyphs">FFFDF5</text>
</g>
</svg>

<!-- ===== scrollbars + status bar ===== -->
<svg style="left:1125px;top:52px" width="15" height="608" viewBox="1125 52 15 608">
<path d="M1130,62 L1133,59 L1136,62" fill="none" stroke="#c4c4c4" stroke-width="1.25"/>
<path d="M1130,653.2 L1133,656 L1136,653.2" fill="none" stroke="#c4c4c4" stroke-width="1.25"/>
<rect x="1126.8" y="346" width="12.4" height="20.4" rx="6" fill="#636363"/>
</svg>
<div class="a" style="left:120px;top:674.6px;width:1020px;height:1.4px;background:#222"></div>
<div class="a" style="left:60px;top:674.8px;width:60px;height:1.2px;background:#262626"></div>
<i class="a" style="left:60px;top:0;width:1px;height:676px;background:#414141"></i>
<div class="a" style="left:123.5px;top:661.5px;width:40.5px;height:13px;background:#444"></div>
<span class="a" style="left:125px;top:664px;font-family:'Liberation Mono','Noto Sans CJK SC',monospace;font-size:8.6px;line-height:10px;color:#f2f2f2;letter-spacing:-0.15px;white-space:nowrap">66.67%</span>
<div class="a" style="left:165px;top:661px;width:13px;height:13px;background:#454545"></div>
<svg style="left:171.4px;top:669.2px" width="1" height="1"><use href="#chev" stroke="#f2f2f2"/></svg>
<div class="a" style="left:179px;top:661px;width:34px;height:13px;background:#525252"></div>
<svg style="left:179px;top:661px" width="34" height="13" viewBox="179 661 34 13"><g fill="#7d7d7d"><rect x="186.4" y="664.6" width="1.4" height="6.4"/><path d="M193,664.6 V671 L188.4,667.8 Z"/><path d="M205.4,664.6 V671 L200.8,667.8 Z"/></g></svg>
<div class="a" style="left:213.5px;top:661px;width:33px;height:13px;background:#444"></div>
<span class="a" style="left:216.6px;top:664px;font-family:'Liberation Mono',monospace;font-size:9px;line-height:10px;color:#f2f2f2">1</span>
<div class="a" style="left:247.5px;top:661px;width:13px;height:13px;background:#454545"></div>
<svg style="left:252.8px;top:669.2px" width="1" height="1"><use href="#chev" stroke="#f2f2f2"/></svg>
<div class="a" style="left:261.5px;top:661px;width:33px;height:13px;background:#525252"></div>
<svg style="left:261px;top:661px" width="34" height="13" viewBox="261 661 34 13"><g fill="#7d7d7d"><path d="M268,664.6 V671 L272.6,667.8 Z"/><path d="M280.8,664.6 V671 L285.4,667.8 Z"/><rect x="285.8" y="664.6" width="1.4" height="6.4"/></g></svg>
<div class="a" style="left:295px;top:661.5px;width:162px;height:13px;background:#575757"></div>
<div class="a" style="left:458px;top:661.5px;width:14px;height:13px;background:#545454"></div>
<span class="a lbl" style="left:367.5px;top:664.2px;font-size:9px;line-height:11px;color:#d4d4d4">椭圆</span>
<svg style="left:460px;top:661px" width="30" height="13" viewBox="460 661 30 13"><path d="M463,664.2 V671.4 L468,667.8 Z" fill="#f0f0f0"/><path d="M480.6,665 L477.8,667.8 L480.6,670.6" fill="none" stroke="#d0d0d0" stroke-width="1.3"/></svg>
<div class="a" style="left:791px;top:661.6px;width:21px;height:12px;border-radius:6px;background:#616161"></div>
<svg style="left:1112px;top:661px" width="14" height="13" viewBox="1112 661 14 13"><path d="M1117.8,665.4 L1120.6,668.2 L1117.8,671" fill="none" stroke="#d0d0d0" stroke-width="1.3"/></svg>
<div class="a" style="left:1126px;top:661px;width:14px;height:13px;background:#5a5a5a"></div>
<i class="a" style="left:1139px;top:0;width:1px;height:676px;background:#3a3a3a"></i>

<!-- ===== red highlight box + selected item ===== -->
<div class="a" id="redbox" style="left:85px;top:166px;width:128.6px;height:31.4px;box-sizing:border-box;border:2.5px solid #f2262c;background:#525252"></div>
<i class="a" style="left:206px;top:169px;width:5.5px;height:25.5px;background:#494949"></i>
<svg style="left:86px;top:166px" width="128" height="31" viewBox="86 166 128 31">
<rect x="96" y="180.8" width="4" height="4" fill="#dedede"/>
<ellipse cx="114.4" cy="182.8" rx="7.2" ry="5.6" fill="#767676" stroke="#d4d4d4" stroke-width="1.1"/>
<path d="M207.4,189.4 v4 l2.6,-2 z" fill="#e8e8e8"/>
</svg>
<span class="a mi" style="left:126.6px;top:177.7px;color:#3f9bea;font-weight:400">椭圆工具</span>
<span class="a mi" style="left:184px;top:177.7px;color:#3f9bea;font-weight:400;font-size:9.6px">(L)</span>
<!-- red arrow -->
<svg style="left:78px;top:278px" width="48" height="76" viewBox="78 278 48 76"><path d="M121.8,281.3 L84.8,334.8 L82,335.4 L81.1,349.8 L93.3,341.4 L91.4,339 Z" fill="#f6222b"/></svg>
<!-- ===== watermark ===== -->
<span class="a" style="left:1025.5px;top:7.6px;font-size:12.2px;line-height:16px;font-weight:500;color:#1e1e1e;white-space:nowrap;text-shadow:0 0 1.5px #fff,0 0 1.5px #fff,0.6px 0.6px 0 #fff,-0.6px -0.6px 0 #fff,0.6px -0.6px 0 #fff,-0.6px 0.6px 0 #fff">思缘设计论坛</span>
<span class="a" style="left:1104.8px;top:13.3px;font-size:7.6px;line-height:10px;font-weight:normal;color:#3a3a3a;-webkit-text-stroke:0.15px #3a3a3a;white-space:nowrap;transform:scaleX(1.02);transform-origin:0 0;text-shadow:0 0 1px #fff,0.5px 0.5px 0 #fff,-0.5px -0.5px 0 #fff,0.5px -0.5px 0 #fff,-0.5px 0.5px 0 #fff">WWW.MISSYUAN.COM</span>
<svg style="left:1104.4px;top:19.8px" width="9" height="8" viewBox="0 0 9 8"><path d="M4.4,0.2 L8.6,7.2 H0.2 Z" fill="#f2262c"/></svg>

</body>
</html>
